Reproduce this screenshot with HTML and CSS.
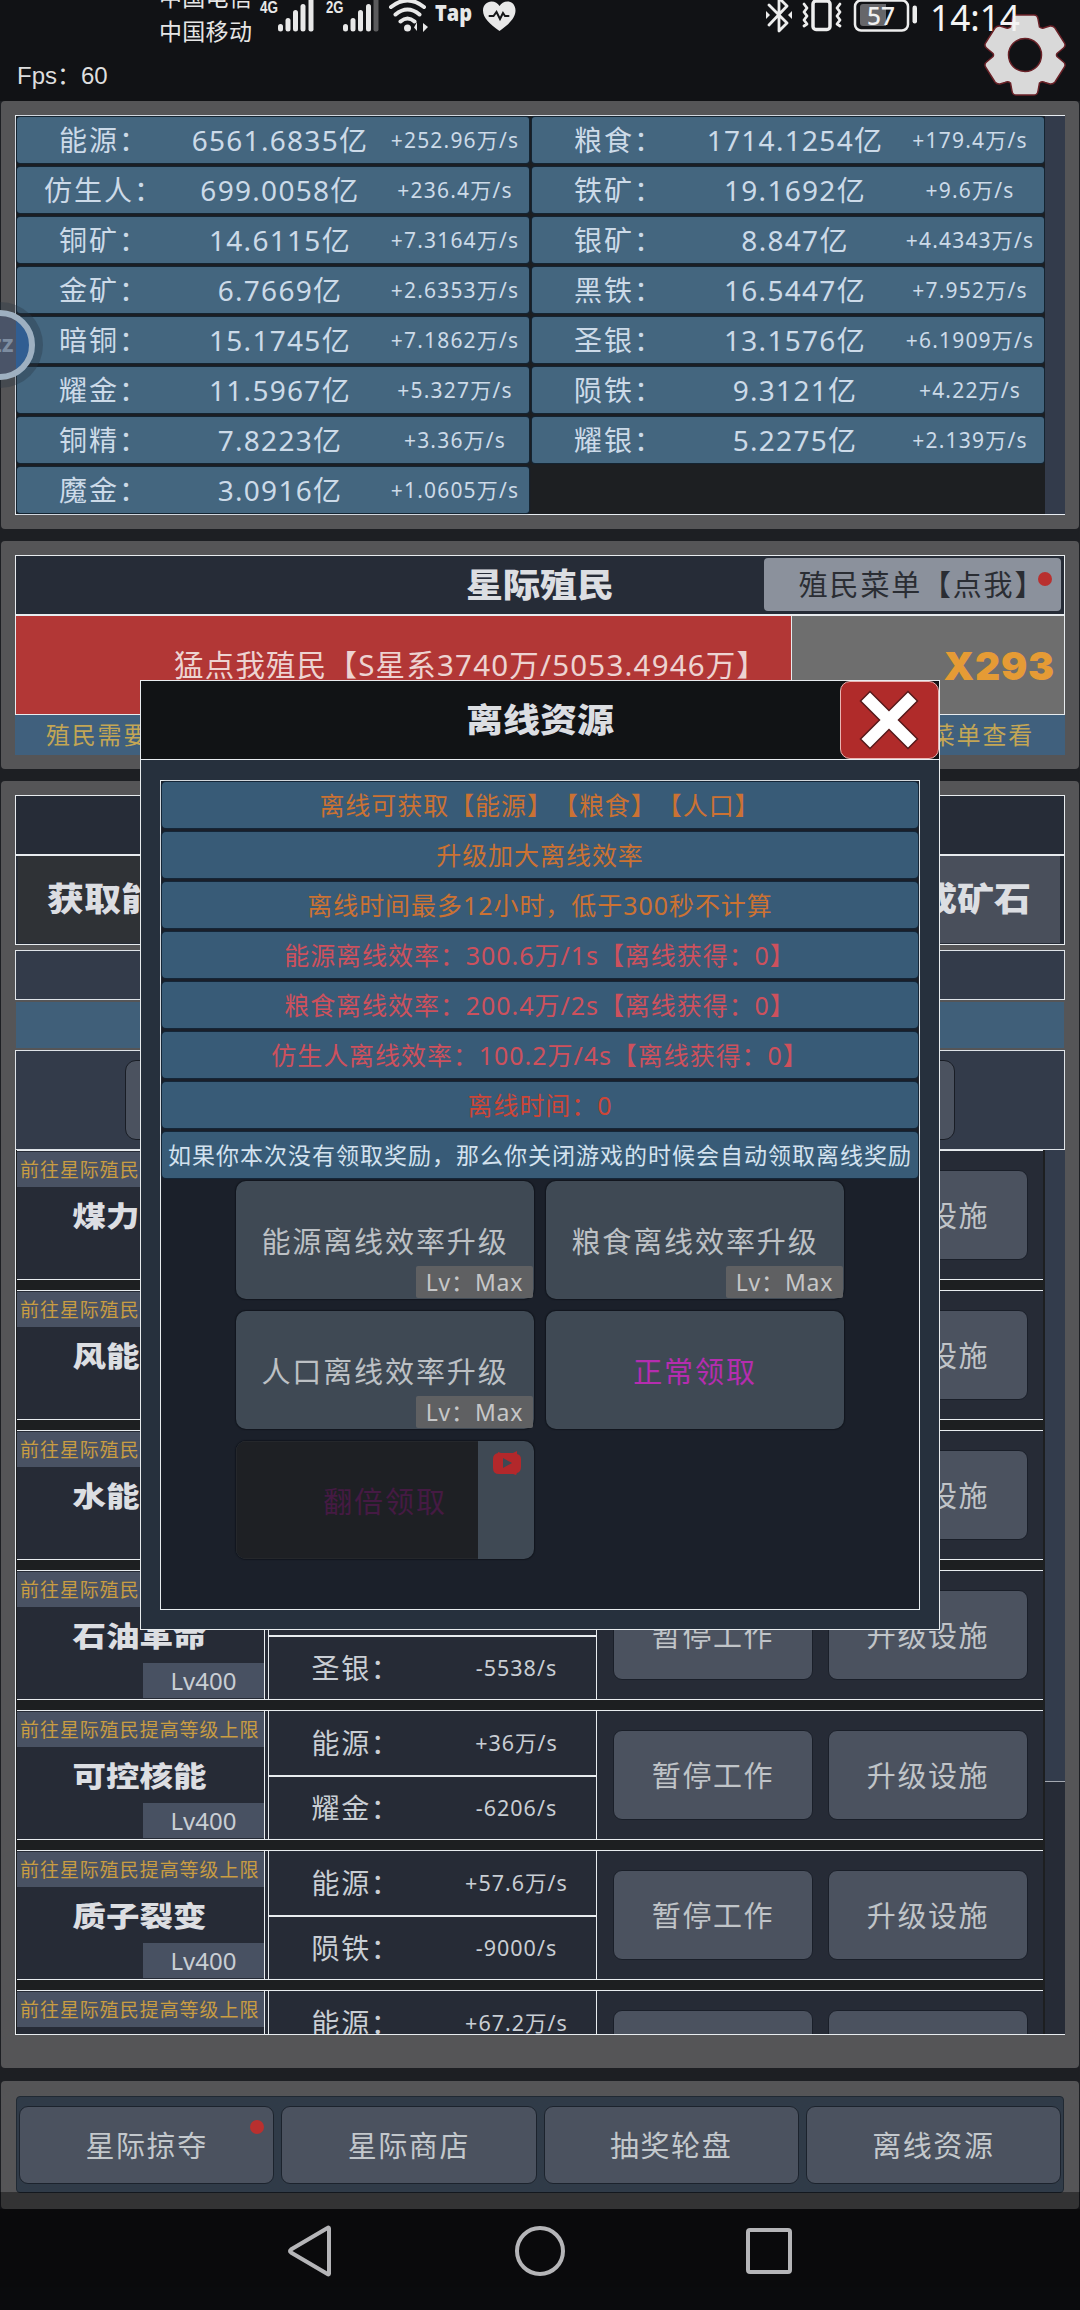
FILE: index.html
```html
<!DOCTYPE html>
<html lang="zh-CN">
<head>
<meta charset="utf-8">
<title>离线资源</title>
<link rel="stylesheet" href="styles.css">
</head>
<body>
<header class="top">
  <div class="status">
    <div class="carriers"><span>中国电信</span><span>中国移动</span></div>
    <svg class="status-left" width="262" height="34" viewBox="258 0 262 34">
      <g fill="#e8e8e8">
        <text x="260" y="12.5" class="net" textLength="18" lengthAdjust="spacingAndGlyphs">4G</text>
        <rect x="278" y="24" width="5" height="7.5" rx="2.5"/><rect x="285.5" y="18" width="5" height="13.500" rx="2.500"/><rect x="293" y="10" width="5" height="21.500" rx="2.500"/><rect x="300.500" y="4" width="5" height="27.500" rx="2.500"/><rect x="308.500" y="-4" width="5" height="35.500" rx="2"/>
        <text x="326" y="12.5" class="net" textLength="17.5" lengthAdjust="spacingAndGlyphs">2G</text>
        <rect x="343" y="24" width="5" height="7.500" rx="2.500"/><rect x="350.500" y="18" width="5" height="13.500" rx="2.500"/><rect x="358" y="10" width="5" height="21.500" rx="2.500"/><rect x="366" y="4" width="5" height="27.500" rx="2.500"/><rect x="373.500" y="-4" width="5" height="35.500" rx="2" fill="#5b5b5d"/>
        <circle cx="407.500" cy="28" r="3.500"/>
        <path d="M417 22v9l-3-3.500zM423 32v-9l5 4z"/>
        <path d="M499.500 31C490 24 483 18 483 10.500C483 5 487 1.500 491.500 1.500C495 1.500 498 3.500 499.500 6C501 3.500 504 1.500 507.500 1.500C512 1.500 515.500 5 515.500 10.500C515.500 18 509 24 499.500 31Z"/>
        <text x="435" y="21" class="tap" textLength="37" lengthAdjust="spacingAndGlyphs">Tap</text>
      </g>
      <g fill="none" stroke="#e8e8e8" stroke-width="4" stroke-linecap="round">
        <path d="M391 7Q407.500 -6 424 7M395.500 14.500Q407.500 4.500 419.500 14.500M400.500 21.500Q407.500 15.500 414.500 21.500"/>
        <path d="M489.500 16h4l3-4 3.500 7 3-6 2 3h3.500" stroke="#151618" stroke-width="2"/>
      </g>
    </svg>
    <svg class="status-right" width="270" height="36" viewBox="760 0 270 36">
      <g fill="none" stroke="#ededed" stroke-width="2.800" stroke-linejoin="round" stroke-linecap="round">
        <path d="M769 5l18 18-8 8V-2l8 8-18 19"/>
        <rect x="813" y="1" width="17" height="28.500" rx="3" stroke-width="3.500"/>
        <path d="M804 4l3 4-3 4 3 4-3 4 3 4-3 2M840 4l-3 4 3 4-3 4 3 4-3 4 3 2"/>
        <rect x="855" y="0.500" width="53" height="30" rx="6" stroke-width="2.500"/>
      </g>
      <path d="M766 11v8l4-4zM792 11v8l-4-4z" fill="#ededed"/>
      <path d="M863 4h23v22h-23q-3 0-3-3V7q0-3 3-3z" fill="#66666a"/>
      <rect x="912.500" y="5.500" width="4.500" height="18" rx="2.200" fill="#ededed"/>
      <text x="867" y="25" class="battery" textLength="28" lengthAdjust="spacingAndGlyphs">57</text>
      <text x="930" y="30.500" class="clock" textLength="90" lengthAdjust="spacingAndGlyphs">14:14</text>
    </svg>
  </div>
  <div class="fps">Fps：60</div>
  <svg class="gear" width="88" height="88" viewBox="-44 -44 88 88">
    <g fill="#d9d9d9" stroke="#6b2228" stroke-width="1.500">
      <path fill-rule="evenodd" d="M-9 -40H9Q12.500 -40 13 -36L14.500 -28Q17 -26 20 -27.500L25 -29Q28 -29.500 30 -27L39.500 -12Q41 -9 38.500 -7L32 -1.500Q31 0 32 1.500L38.500 7Q41 9 39.500 12L30 27Q28 29.500 25 29L20 27.500Q17 26 14.500 28L13 36Q12.500 40 9 40H-9Q-12.500 40 -13 36L-14.500 28Q-17 26 -20 27.500L-25 29Q-28 29.500 -30 27L-39.500 12Q-41 9 -38.500 7L-32 1.500Q-31 0 -32 -1.500L-38.500 -7Q-41 -9 -39.500 -12L-30 -27Q-28 -29.500 -25 -29L-20 -27.500Q-17 -26 -14.500 -28L-13 -36Q-12.500 -40 -9 -40ZM16.500 0A16.500 16.500 0 1 0 -16.500 0A16.500 16.500 0 1 0 16.500 0Z"/>
    </g>
  </svg>
</header>

<main class="panels">
  <section class="panel">
    <div class="resources">
      <div class="res-grid">
        <div class="res"><b>能源：</b><span>6561.6835亿</span><i>+252.96万/s</i></div>
        <div class="res"><b>粮食：</b><span>1714.1254亿</span><i>+179.4万/s</i></div>
        <div class="res"><b>仿生人：</b><span>699.0058亿</span><i>+236.4万/s</i></div>
        <div class="res"><b>铁矿：</b><span>19.1692亿</span><i>+9.6万/s</i></div>
        <div class="res"><b>铜矿：</b><span>14.6115亿</span><i>+7.3164万/s</i></div>
        <div class="res"><b>银矿：</b><span>8.847亿</span><i>+4.4343万/s</i></div>
        <div class="res"><b>金矿：</b><span>6.7669亿</span><i>+2.6353万/s</i></div>
        <div class="res"><b>黑铁：</b><span>16.5447亿</span><i>+7.952万/s</i></div>
        <div class="res"><b>暗铜：</b><span>15.1745亿</span><i>+7.1862万/s</i></div>
        <div class="res"><b>圣银：</b><span>13.1576亿</span><i>+6.1909万/s</i></div>
        <div class="res"><b>耀金：</b><span>11.5967亿</span><i>+5.327万/s</i></div>
        <div class="res"><b>陨铁：</b><span>9.3121亿</span><i>+4.22万/s</i></div>
        <div class="res"><b>铜精：</b><span>7.8223亿</span><i>+3.36万/s</i></div>
        <div class="res"><b>耀银：</b><span>5.2275亿</span><i>+2.139万/s</i></div>
        <div class="res"><b>魔金：</b><span>3.0916亿</span><i>+1.0605万/s</i></div>
      </div>
      <div class="track full"></div>
    </div>
  </section>

  <section class="panel colony">
    <div class="title-bar"><h2 class="heading">星际殖民</h2><button class="menu-btn">殖民菜单【点我】<span class="dot"></span></button></div>
    <div class="tap-row"><div class="tap-red">猛点我殖民【S星系3740万/5053.4946万】</div><div class="tap-mult">X293</div></div>
    <div class="hint"><span>殖民需要</span><span>菜单查看</span></div>
  </section>

  <section class="panel works">
    <div class="title-bar"></div>
    <div class="tabs"><div class="tab active"><span class="heading">获取能源</span></div><div class="tab"><span class="heading">合成矿石</span></div></div>
    <div class="strip"></div>
    <div class="strip-blue"></div>
    <div class="strip-tall"><div class="wide-btn"></div></div>
    <div class="facility-box">
      <div class="facilities">
        <div class="facility"><div class="who"><p>前往星际殖民提高等级上限</p><h3 class="heading">煤力发电</h3><em>Lv400</em></div><div class="rates"><div><b>能源：</b></div><div></div></div><div class="acts"><button>暂停工作</button><button>升级设施</button></div></div>
        <div class="facility"><div class="who"><p>前往星际殖民提高等级上限</p><h3 class="heading">风能发电</h3><em>Lv400</em></div><div class="rates"><div><b>能源：</b></div><div></div></div><div class="acts"><button>暂停工作</button><button>升级设施</button></div></div>
        <div class="facility"><div class="who"><p>前往星际殖民提高等级上限</p><h3 class="heading">水能发电</h3><em>Lv400</em></div><div class="rates"><div><b>能源：</b></div><div></div></div><div class="acts"><button>暂停工作</button><button>升级设施</button></div></div>
        <div class="facility"><div class="who"><p>前往星际殖民提高等级上限</p><h3 class="heading">石油革命</h3><em>Lv400</em></div><div class="rates"><div><b>能源：</b></div><div><b>圣银：</b><i>-5538/s</i></div></div><div class="acts"><button>暂停工作</button><button>升级设施</button></div></div>
        <div class="facility"><div class="who"><p>前往星际殖民提高等级上限</p><h3 class="heading">可控核能</h3><em>Lv400</em></div><div class="rates"><div><b>能源：</b><i>+36万/s</i></div><div><b>耀金：</b><i>-6206/s</i></div></div><div class="acts"><button>暂停工作</button><button>升级设施</button></div></div>
        <div class="facility"><div class="who"><p>前往星际殖民提高等级上限</p><h3 class="heading">质子裂变</h3><em>Lv400</em></div><div class="rates"><div><b>能源：</b><i>+57.6万/s</i></div><div><b>陨铁：</b><i>-9000/s</i></div></div><div class="acts"><button>暂停工作</button><button>升级设施</button></div></div>
        <div class="facility"><div class="who"><p>前往星际殖民提高等级上限</p></div><div class="rates"><div><b>能源：</b><i>+67.2万/s</i></div><div></div></div><div class="acts"><button></button><button></button></div></div>
      </div>
      <div class="track"><div class="thumb"></div></div>
    </div>
  </section>

  <section class="panel dock">
    <div class="dock-bar"><button>星际掠夺<span class="dot"></span></button><button>星际商店</button><button>抽奖轮盘</button><button>离线资源</button></div>
  </section>
</main>

<div class="bubble">zz</div>

<div class="modal">
  <div class="modal-head">
    <h2 class="heading">离线资源</h2>
    <button class="close"><svg width="62" height="62" viewBox="-31 -31 62 62"><path d="M-19 -28.500L0 -9.500L19 -28.500L28.500 -19L9.500 0L28.500 19L19 28.500L0 9.500L-19 28.500L-28.500 19L-9.500 0L-28.500 -19Z" fill="#fff" stroke="#56191a" stroke-width="1.500"/></svg></button>
  </div>
  <div class="modal-body">
    <div class="line orange">离线可获取【能源】【粮食】【人口】</div>
    <div class="line orange">升级加大离线效率</div>
    <div class="line orange">离线时间最多12小时，低于300秒不计算</div>
    <div class="line pink">能源离线效率：300.6万/1s【离线获得：0】</div>
    <div class="line pink">粮食离线效率：200.4万/2s【离线获得：0】</div>
    <div class="line pink">仿生人离线效率：100.2万/4s【离线获得：0】</div>
    <div class="line red">离线时间：0</div>
    <div class="line note">如果你本次没有领取奖励，那么你关闭游戏的时候会自动领取离线奖励</div>
    <div class="upgrades">
      <button>能源离线效率升级<em>Lv：Max</em></button>
      <button>粮食离线效率升级<em>Lv：Max</em></button>
      <button>人口离线效率升级<em>Lv：Max</em></button>
      <button class="claim">正常领取</button>
      <button class="double"><span class="shade"></span><span class="double-text">翻倍领取</span>
        <svg class="video" width="30" height="24" viewBox="0 0 30 24"><path d="M6 1l3 1h12l4-2 0 3q4 1 4 5v8q0 5-4 6l-1 2-3-1H7q-6 0-6-6V8q0-5 5-6z" fill="#b3282b"/><path d="M11 7l9 5-9 5z" fill="#3f4954"/></svg>
      </button>
    </div>
  </div>
</div>

<nav class="nav">
  <svg width="46" height="52" viewBox="0 0 46 52"><path d="M42 3.500V48.500Q42 50 40.500 49L4 27.500Q2 26 4 24.500L40.500 3Q42 2 42 3.500Z"/></svg>
  <svg width="52" height="52" viewBox="0 0 52 52"><circle cx="26" cy="26" r="23"/></svg>
  <svg width="46" height="52" viewBox="0 0 46 52"><rect x="2" y="5" width="42" height="42" rx="2"/></svg>
</nav>
</body>
</html>
```
FILE: styles.css
```css
* { box-sizing: border-box; margin: 0; padding: 0; }
html, body { width: 1080px; height: 2310px; overflow: hidden; }
body {
  position: relative;
  background: #111215;
  color: #ccdae8;
  font: 400 28px/1 "Noto Sans", "Noto Sans CJK SC", sans-serif;
  letter-spacing: 1px;
  white-space: nowrap;
  text-spacing-trim: space-all;
}
button { border: 0; font: inherit; color: inherit; letter-spacing: inherit; white-space: nowrap; }
b, i, em, h2, h3 { font-weight: 400; font-style: normal; }
.heading {
  font: 900 37px/1 "Noto Sans CJK SC", sans-serif;
  letter-spacing: 0;
  color: #dcdee2;
  transform: translateY(-2px) scaleY(.88);
}
.dot { width: 14px; height: 14px; border-radius: 50%; background: #b9302f; position: absolute; }

/* top area */
.top { height: 101px; position: relative; overflow: hidden; }
.status { height: 46px; display: flex; position: relative; z-index: 2; }
.carriers { width: 98px; margin-left: 159px; margin-top: -17px; height: 60px; display: flex; flex-direction: column; gap: 7px; font: 400 23px/27px "Noto Sans CJK SC", sans-serif; letter-spacing: .3px; color: #e6e6e6; }
.status-left { margin-left: 1px; }
.status-right { margin-left: 240px; }
.net { font: 700 17px "Liberation Sans", sans-serif; letter-spacing: 0; }
.tap { font: 800 23px "Open Sans", sans-serif; letter-spacing: 0; }
.battery { font: 500 25px "Noto Sans", sans-serif; fill: #f0f0f0; letter-spacing: 0; }
.clock { font: 400 37px "Noto Sans", sans-serif; fill: #f4f4f4; letter-spacing: 0; }
.fps { margin: 16px 0 0 17px; font: 400 24px/28px "Liberation Sans", "Noto Sans CJK SC", sans-serif; letter-spacing: 0; color: #dedede; }
.gear { position: absolute; left: 981px; top: 11px; z-index: 1; }

/* panels */
.panels { display: flex; flex-direction: column; gap: 12px; background: #1d1f23; }
.panel { margin: 0 1px; padding: 14px; height: 428px; background: #555557; border-radius: 4px; }
.resources { height: 400px; border: solid #e8edf2; border-width: 1px 0 1px 1px; background: #1d1f22; display: flex; }
.res-grid { width: 1029px; padding: 1px 0 1px 1px; display: grid; grid-template-columns: 512px 512px; grid-auto-rows: 46px; gap: 4px 3px; background: #1d1f22; }
.res { background: #44667f; border-radius: 3px; display: grid; grid-template-columns: 174px 178px 172px; align-items: center; text-align: center; width: 512px; box-shadow: 0 0 1px 1px #142534; }
.res b { letter-spacing: 2px; }
.res span { letter-spacing: 1.300px; }
.res i { font-size: 21px; letter-spacing: 1.200px; }
.track { width: 20px; background: #262b36; }
.track.full { background: #333b4b; }

.colony { height: 228px; }
.title-bar { height: 60px; border: 1px solid #e8ecef; background: #262c37; position: relative; display: flex; align-items: center; justify-content: center; }
.menu-btn { position: absolute; right: 3px; top: 2px; width: 297px; height: 53px; border-radius: 4px; background: #8b919c; color: #2a2d33; font-size: 29px; letter-spacing: 1.8px; padding-left: 19px; }
.menu-btn .dot { right: 9px; top: 14px; }
.tap-row { height: 100px; display: flex; border: 1px solid #e8ecef; }
.tap-red { width: 776px; background: #b23736; border-right: 1px solid #e8ecef; color: #edd3d1; font-size: 29.5px; letter-spacing: 1.200px; display: flex; align-items: center; padding-left: 158px; }
.tap-mult { flex: 1; background: #6e6e6e; color: #e59b35; display: flex; align-items: center; justify-content: flex-end; padding-right: 9px; font: 900 39px/1 Inter, sans-serif; letter-spacing: .8px; }
.hint { height: 40px; background: #40607d; color: #c3a655; font-size: 24px; letter-spacing: 1.8px; display: flex; justify-content: space-between; align-items: center; padding: 0 31px; }

.works { height: 1287px; display: flex; flex-direction: column; }
.tabs { height: 90px; border: solid #e8ecef; border-width: 1px; background: #262c37; display: flex; justify-content: space-between; padding: 0 4px 1px 2px; flex: none; }
.tab { width: 206px; background: #494f5b; display: flex; align-items: center; justify-content: center; }
.tab.active { background: #2f3236; }
.title-bar, .strip, .strip-blue, .strip-tall { flex: none; }
.strip { margin-top: 5px; height: 50px; border: 1px solid #dfe3e8; background: #333b4a; }
.strip-blue { margin: 2px 1px 2px; height: 46px; background: #405f79; }
.strip-tall { height: 100px; border: 1px solid #dfe3e8; background: #333b4a; padding: 9px 109px; }
.wide-btn { height: 80px; border: 1px solid #191d25; border-radius: 11px; background: #4b525f; }
.facility-box { height: 885px; flex: none; border: solid #e8ecef; border-width: 0 0 1px 1px; display: flex; overflow: hidden; background: #1d1f21; }
.facilities { width: 1027px; margin: 0 2px 0 0; padding-left: 1px; display: flex; flex-direction: column; gap: 10px; }
.facility { height: 130px; flex: none; border: solid #e8ecef; border-width: 1px 0; background: #262b36; display: grid; grid-template-columns: 248px 3px 329px 1fr; }
.who { position: relative; border-right: 1px solid #e8ecef; display: flex; flex-direction: column; align-items: center; }
.who p { width: 247px; height: 36px; border-top: 1px solid #262b36; background: #495263; color: #c99d42; font-size: 19px; line-height: 37px; letter-spacing: .95px; padding-left: 3px; }
.who .heading { font-size: 33.500px; letter-spacing: 0; margin-top: 12px; margin-left: -2px; transform: translateY(-1px) scaleY(.86); }
.who em { margin-top: auto; margin-bottom: 1px; align-self: flex-end; width: 121px; height: 35px; background: #485162; color: #c9ced4; font-size: 24px; line-height: 35px; letter-spacing: 0; text-align: center; }
.rates { grid-column: 3; border: solid #e8ecef; border-width: 0 1px; display: grid; grid-template-rows: 1fr 1fr; color: #c9ced4; }
.rates div { display: grid; grid-template-columns: 174px 147px; align-items: center; text-align: center; padding-left: 0; }
.rates div + div { border-top: 2px solid #e8ecef; }
.rates b { letter-spacing: 1.600px; }
.rates i { font-size: 21.500px; }
.acts { display: flex; gap: 15px; align-items: center; padding-left: 16px; padding-right: 15px; }
.acts button { flex: 1; height: 90px; border: 1px solid #1a1f29; border-radius: 9px; background: #4b525f; color: #c0c4c8; font-size: 29px; letter-spacing: 1.600px; }
.thumb { height: 632px; background: #333c4c; border-bottom: 1px solid #a4a9b1; }

.dock { height: 128px; margin-top: 1px; padding-top: 15px; }
.dock-bar { height: 97px; margin: 0 1px; border-radius: 4px; background: #303b48; padding: 9px 2px 8px; display: grid; grid-template-columns: repeat(4, 1fr); gap: 7px; border: 1px solid #202933; }
.dock-bar button { position: relative; border: 1px solid #1c232d; border-radius: 9px; background: #4b525f; color: #c3c8cc; font-size: 29px; letter-spacing: 1.600px; }
.dock-bar .dot { right: 9px; top: 13px; }

/* floating helper */
.bubble { position: absolute; left: -35px; top: 310px; width: 70px; height: 70px; border-radius: 50%; border: 6px solid #9eb0c1; background: linear-gradient(90deg, #4a5468 0 45px, #315e92 45px); color: #7d8ca0; font: 700 24px/54px "Noto Sans", sans-serif; letter-spacing: 0; padding-left: 19px; box-shadow: 0 0 0 8px rgba(40, 55, 70, .35); }

/* dialog */
.modal { position: absolute; left: 140px; top: 680px; width: 800px; height: 950px; border: 1px solid #e8ecef; background: #26303d; }
.modal-head { position: relative; height: 79px; border-bottom: 1px solid #e8ecef; background: #111315; display: flex; align-items: center; justify-content: center; }
.close { position: absolute; right: 0; top: 0; width: 99px; height: 78px; border: 1px solid #e9b4b1; border-radius: 10px; background: #b02b2a; display: flex; align-items: center; justify-content: center; padding: 0 2px 0 0; }
.modal-body { margin: 20px 19px 0; height: 830px; border: 1px solid #e8ecef; background: #1b202a; padding: 1px; display: flex; flex-direction: column; gap: 4px; }
.line { height: 46px; flex: none; border-radius: 4px; background: #385b77; text-align: center; font-size: 25px; line-height: 46px; letter-spacing: .95px; box-shadow: 0 0 1px 1px #14273a; }
.orange { color: #cb7233; }
.pink { color: #cd515d; }
.red { color: #cd4637; }
.note { font-size: 23px; letter-spacing: 1px; color: #d3e2ef; }
.upgrades { margin-top: -1px; padding: 0 73px 0 74px; display: grid; grid-template-columns: 298px 298px; grid-auto-rows: 118px; gap: 12px; }
.upgrades button { position: relative; border-radius: 10px; background: #3f4954; color: #bcc0c4; font-size: 29px; letter-spacing: 1.900px; padding-top: 3px; box-shadow: 0 0 1px 1px #12161e; }
.upgrades em { position: absolute; right: 1px; bottom: 1px; width: 117px; height: 32px; background: #5f6062; border-radius: 2px; color: #c6c7c8; font-size: 23px; line-height: 32px; letter-spacing: .8px; }
.upgrades .claim { color: #b52daf; }
.upgrades .double { overflow: hidden; color: #451a43; }
.shade { position: absolute; left: 0; top: 0; width: 242px; height: 118px; background: #1e2024; border: solid #25272b; border-width: 1px 0 1px 1px; }
.double-text { position: relative; }
.video { position: absolute; right: 12px; top: 10px; }

/* system navigation */
.nav { position: absolute; left: 0; top: 2192px; width: 1080px; height: 118px; background: rgba(0, 0, 0, .4); display: flex; justify-content: space-between; padding: 33px 288px 0 287px; }
.nav svg { fill: none; stroke: #b5b5b8; stroke-width: 4; }
```
